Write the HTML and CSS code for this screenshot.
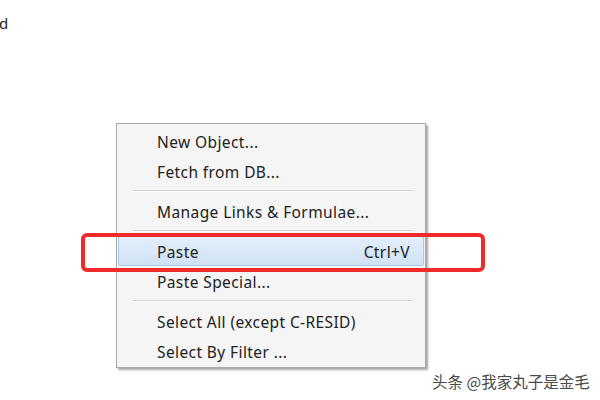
FILE: index.html
```html
<!DOCTYPE html>
<html>
<head>
<meta charset="utf-8">
<link rel="stylesheet" href="styles.css">
</head>
<body>
<div class="page">
  <div class="corner-text">d</div>
  <div class="menu">
    <div class="item">New Object...</div>
    <div class="item">Fetch from DB...</div>
    <div class="sep"></div>
    <div class="item">Manage Links &amp; Formulae...</div>
    <div class="sep"></div>
    <div class="item active"><span>Paste</span><span class="key">Ctrl+V</span></div>
    <div class="item">Paste Special...</div>
    <div class="sep"></div>
    <div class="item">Select All (except C-RESID)</div>
    <div class="item">Select By Filter ...</div>
  </div>
  <div class="callout"></div>
  <div class="watermark">头条 @我家丸子是金毛</div>
</div>
</body>
</html>
```
FILE: styles.css
```css
html, body {
  margin: 0;
  padding: 0;
  background: #ffffff;
}
.page {
  position: relative;
  width: 600px;
  height: 400px;
  overflow: hidden;
  font-family: "Noto Sans", "Open Sans", sans-serif;
}
.corner-text {
  padding-top: 13px;
  padding-left: 0;
  height: 20px;
  font-size: 15px;
  line-height: 20px;
  color: #1a1a2a;
  margin-left: -1px;
}
.menu {
  margin-left: 116px;
  margin-top: 90px;
  width: 306px;
  background: #f5f5f5;
  border: 1px solid #a9a9a9;
  box-shadow: 2px 2px 2px rgba(0,0,0,0.35);
  padding: 2px 1px 1px 1px;
  color: #222222;
  font-size: 15.5px;
  letter-spacing: 0.4px;
}
.item {
  height: 30px;
  line-height: 30px;
  padding-left: 38px;
  padding-right: 13px;
  display: flex;
  justify-content: space-between;
  box-sizing: border-box;
  border: 1px solid transparent;
}
.item.active {
  background: linear-gradient(#e3eef9, #cfe2f5);
  border-color: #aac9e8;
  border-radius: 2px;
}
.sep {
  height: 10px;
  margin: 0 11px 0 15px;
  display: flex;
  align-items: center;
}
.sep::before {
  content: "";
  display: block;
  width: 100%;
  height: 1px;
  background: #d2d2d2;
  border-bottom: 1px solid #ffffff;
}
.callout {
  position: absolute;
  left: 81px;
  top: 233px;
  width: 396px;
  height: 31px;
  border: 4px solid #ee2a2a;
  border-radius: 6px;
}
.watermark {
  position: absolute;
  left: 432px;
  top: 371px;
  font-family: "Noto Sans CJK SC", sans-serif;
  font-size: 15.5px;
  line-height: 20px;
  color: #4a4a4a;
}
```
